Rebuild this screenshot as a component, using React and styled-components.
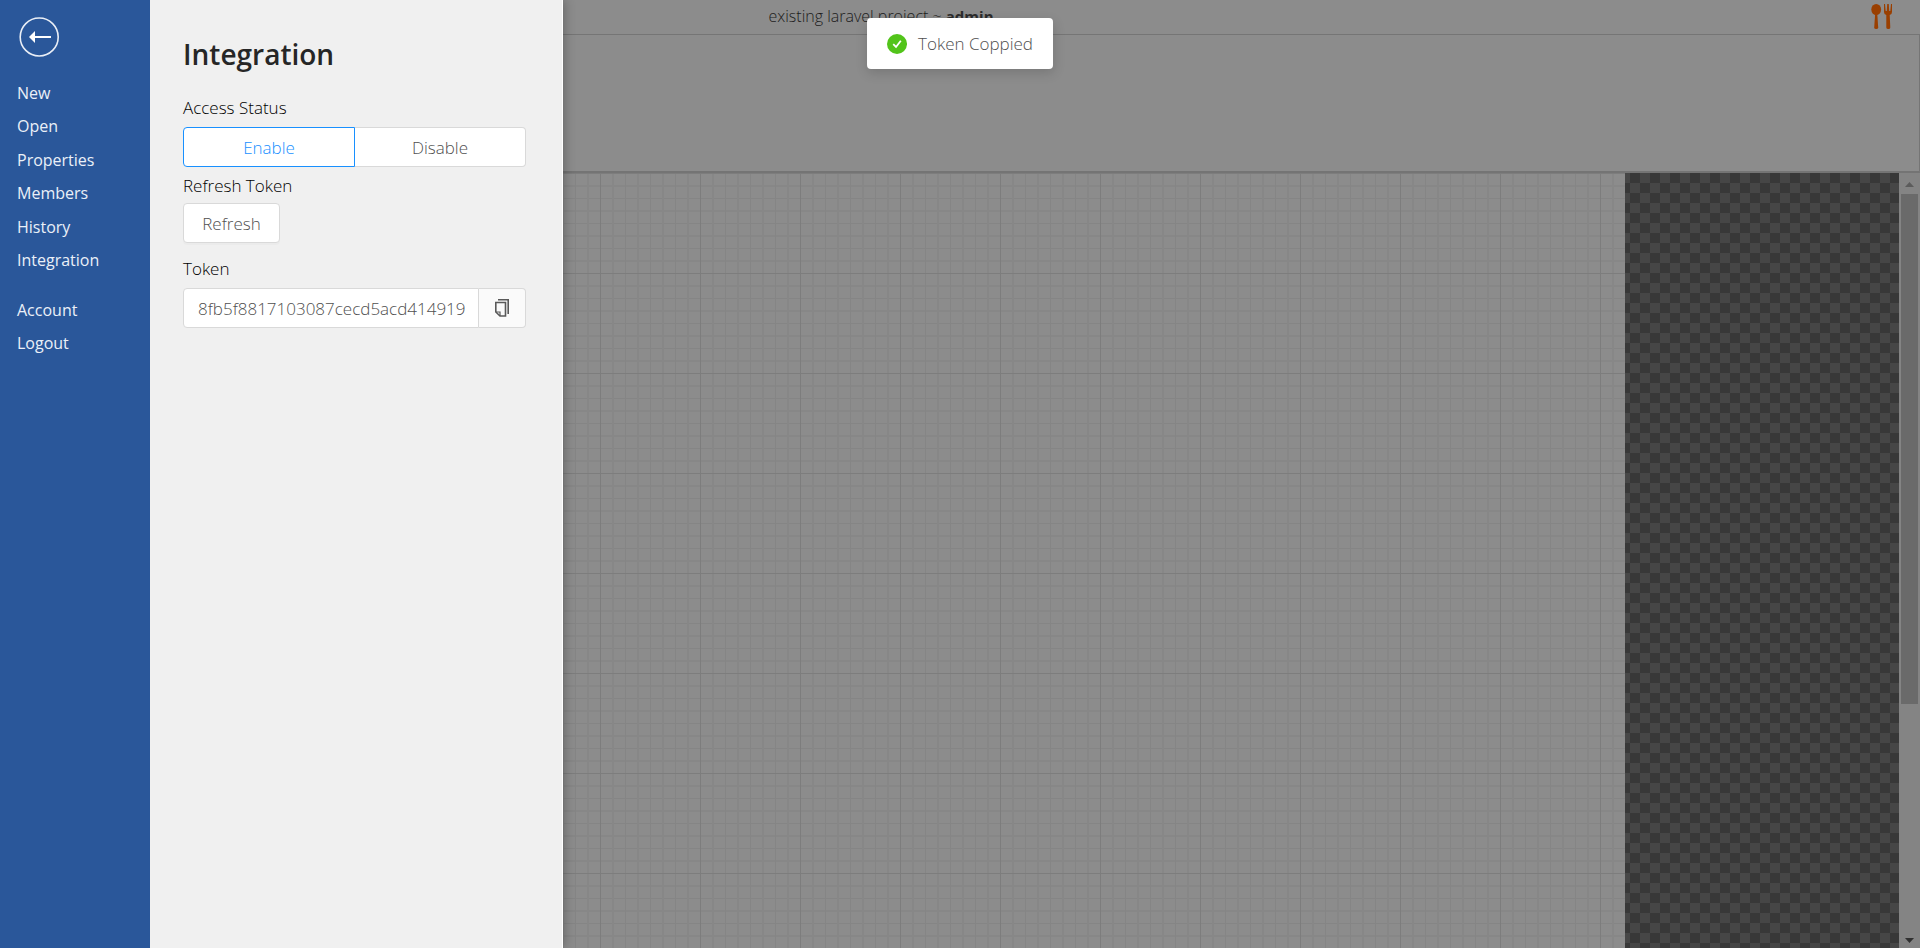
import React, { useState } from "react";
import styled, { createGlobalStyle, css } from "styled-components";

const GlobalStyle = createGlobalStyle`
  * { box-sizing: border-box; }
  html, body, #root { height: 100%; }
  body {
    margin: 0;
    overflow: hidden;
    background: #8c8c8c;
    color: #000;
    font-family: "Open Sans", "Noto Sans", sans-serif;
    font-size: 17px;
    font-weight: 300;
  }
  button, input { font: inherit; }
`;

const Page = styled.div`
  position: relative;
  height: 100vh;
  display: flex;
  flex-direction: column;
`;

const TitleBar = styled.header`
  height: 35px;
  display: grid;
  grid-template-columns: 1fr auto 1fr;
  align-items: start;
  padding: 0 26px 0 0;
  border-bottom: 1px solid #757575;
`;

const ProjectTitle = styled.div`
  grid-column: 2;
  padding-right: 132px;
  font-size: 16px;
  line-height: 32px;
  color: #1c1c1c;
  strong {
    font-size: 15px;
    font-weight: 700;
    color: #2b2b2b;
  }
`;

const Brand = styled.div`
  justify-self: end;
  display: flex;
  padding-top: 3px;
`;

const Ribbon = styled.section`
  height: 138px;
  border-right: 1px solid #757575;
  border-bottom: 2px solid #747474;
`;

const Workspace = styled.main`
  flex: 1;
  min-height: 0;
  display: flex;
`;

const Canvas = styled.div`
  flex: 1;
  background-color: #8c8c8c;
  background-image:
    linear-gradient(to right, #7d7d7d 1px, transparent 1px),
    linear-gradient(to bottom, #7d7d7d 1px, transparent 1px),
    linear-gradient(to right, #858585 1px, transparent 1px 12px, #878787 12px 14px, transparent 14px),
    linear-gradient(to bottom, #858585 1px, transparent 1px 12px, #878787 12px 14px, transparent 14px);
  background-size: 100px 100px, 100px 100px, 25px 25px, 25px 25px;
`;

const Checkerboard = styled.div`
  width: 274px;
  background: conic-gradient(#464646 25%, #383838 0 50%, #464646 0 75%, #383838 0) 5px 0 / 20px 20px;
`;

const Scrollbar = styled.div`
  width: 21px;
  display: flex;
  flex-direction: column;
  align-items: center;
  background: #848484;
  padding: 0 1px 0 1px;
  svg { display: block; flex: none; }
`;

const Track = styled.div`
  flex: 1;
  align-self: stretch;
`;

const Thumb = styled.div`
  width: 17px;
  margin-left: 1px;
  height: calc(70% - 3px);
  background: #6a6a6a;
`;

const Drawer = styled.aside`
  position: absolute;
  inset: 0 auto 0 0;
  display: flex;
  box-shadow: 2px 0 10px rgba(0, 0, 0, 0.25);
`;

const Sidebar = styled.div`
  width: 150px;
  padding: 16px 0 0 17px;
  background: #2a579a;
`;

const BackButton = styled.button`
  display: block;
  margin: 0 0 18px 2px;
  padding: 0;
  border: 0;
  background: none;
  svg { display: block; }
`;

const Menu = styled.nav`
  display: grid;
  grid-auto-rows: 1fr;
  align-items: center;
  height: ${(p) => (p.$short ? "67px" : "201px")};
  margin-bottom: 16px;
`;

const MenuLink = styled.a`
  color: #eaf0f8;
  font-size: 16px;
  font-weight: 400;
  text-decoration: none;
`;

const Panel = styled.section`
  width: 413px;
  padding: 34px 36px 0 33px;
  background: #f0f0f0;
  border-right: 1px solid #fff;
`;

const Heading = styled.h1`
  margin: 0 0 20px;
  font-size: 28px;
  line-height: 40px;
  font-weight: 600;
  color: #262626;
`;

const Label = styled.label`
  display: block;
  font-size: 17px;
  line-height: 28px;
`;

const Control = css`
  height: 40px;
  border: 1px solid #d9d9d9;
  background: #fff;
  color: #505050;
`;

const Segments = styled.div`
  display: flex;
  margin: 5px 0;
`;

const Segment = styled.button`
  ${Control}
  flex: 1;
  padding: 0;
  border-radius: 0 4px 4px 0;
  border-left: 0;
  ${(p) =>
    p.$active &&
    css`
      color: #1890ff;
      border: 1px solid #1890ff;
      border-radius: 4px 0 0 4px;
    `}
`;

const Button = styled.button`
  ${Control}
  display: block;
  width: 97px;
  margin: 3px 0 12px;
  padding: 0;
  border-radius: 4px;
  box-shadow: 0 2px 0 rgba(0, 0, 0, 0.02);
`;

const TokenRow = styled.div`
  display: flex;
  margin-top: 5px;
`;

const TokenInput = styled.input`
  ${Control}
  flex: 1;
  min-width: 0;
  padding: 0 13px 0 14px;
  border-radius: 4px 0 0 4px;
  outline: 0;
`;

const CopyButton = styled.button`
  ${Control}
  display: grid;
  place-items: center;
  width: 47px;
  padding: 0;
  background: #fafafa;
  border-left: 0;
  border-radius: 0 4px 4px 0;
`;

const Toast = styled.div`
  position: absolute;
  top: 18px;
  left: 50%;
  transform: translateX(-50%);
  display: flex;
  align-items: center;
  gap: 11px;
  height: 51px;
  padding: 0 20px;
  border-radius: 4px;
  background: #fff;
  color: #505050;
  white-space: nowrap;
  box-shadow: 0 4px 12px rgba(0, 0, 0, 0.15);
`;

const BackIcon = () => (
  <svg width="40" height="42" viewBox="0 0 40 42" aria-hidden="true">
    <circle cx="20.200" cy="21" r="19" fill="none" stroke="#e9eef6" strokeWidth="1.600" />
    <path d="M15 21H32" stroke="#fff" strokeWidth="2" />
    <path d="M10 21L16 15V27Z" fill="#fff" />
  </svg>
);

const CutleryIcon = () => (
  <svg width="24" height="27" viewBox="0 0 24 27" fill="#9a3f00" aria-hidden="true">
    <ellipse cx="6.200" cy="6.500" rx="4.900" ry="5.500" />
    <path d="M5.200 10h2l1 14.500a2 1.500 0 0 1-4 0z" />
    <path d="M14 1h1l.7 7h1.100l.4-7h1.600l.4 7h1.100l.7-7h1V9q0 2.500-2.300 3l.6 12.500a2 1.500 0 0 1-4 0L16.300 12q-2.300-.5-2.300-3z" />
  </svg>
);

const CopyIcon = () => (
  <svg width="16" height="20" viewBox="0 0 16 20" fill="none" stroke="#595959" strokeWidth="1.600" aria-hidden="true">
    <path d="M4 1.800H14.200V16" />
    <path d="M1.800 4.500H11.500V18H6L1.800 14Z" />
    <path d="M2 14H6V18" strokeWidth="1.200" />
  </svg>
);

const CheckIcon = () => (
  <svg width="20" height="20" viewBox="0 0 20 20" aria-hidden="true">
    <circle cx="10" cy="10" r="10" fill="#52c41a" />
    <path d="M6.200 10.200L9 13L13.800 6.800" fill="none" stroke="#fff" strokeWidth="1.800" />
  </svg>
);

const Arrow = ({ down }) => (
  <svg width="19" height="21" viewBox="0 0 19 21" aria-hidden="true">
    <path d={down ? "M5 11H14L9.500 16Z" : "M5 14H14L9.500 9Z"} fill={down ? "#303030" : "#5c5c5c"} />
  </svg>
);

export default function App() {
  const [enabled, setEnabled] = useState(true);
  const [token, setToken] = useState("8fb5f8817103087cecd5acd4149194b2");
  return (
    <Page>
      <GlobalStyle />
      <TitleBar>
        <ProjectTitle>existing laravel project ~ <strong>admin</strong></ProjectTitle>
        <Brand><CutleryIcon /></Brand>
      </TitleBar>
      <Ribbon />
      <Workspace>
        <Canvas />
        <Checkerboard />
        <Scrollbar>
          <Arrow />
          <Track><Thumb /></Track>
          <Arrow down />
        </Scrollbar>
      </Workspace>
      <Drawer>
        <Sidebar>
          <BackButton aria-label="Back"><BackIcon /></BackButton>
          <Menu>
            {["New", "Open", "Properties", "Members", "History", "Integration"].map((name) => (
              <MenuLink key={name} href="#">{name}</MenuLink>
            ))}
          </Menu>
          <Menu $short>
            <MenuLink href="#">Account</MenuLink>
            <MenuLink href="#">Logout</MenuLink>
          </Menu>
        </Sidebar>
        <Panel>
          <Heading>Integration</Heading>
          <Label as="div" id="access-status">Access Status</Label>
          <Segments role="group" aria-labelledby="access-status">
            <Segment $active={enabled} onClick={() => setEnabled(true)}>Enable</Segment>
            <Segment $active={!enabled} onClick={() => setEnabled(false)}>Disable</Segment>
          </Segments>
          <Label htmlFor="refresh">Refresh Token</Label>
          <Button id="refresh">Refresh</Button>
          <Label htmlFor="token">Token</Label>
          <TokenRow>
            <TokenInput id="token" value={token} onChange={(e) => setToken(e.target.value)} />
            <CopyButton aria-label="Copy token"><CopyIcon /></CopyButton>
          </TokenRow>
        </Panel>
      </Drawer>
      <Toast role="status"><CheckIcon />Token Coppied</Toast>
    </Page>
  );
}
